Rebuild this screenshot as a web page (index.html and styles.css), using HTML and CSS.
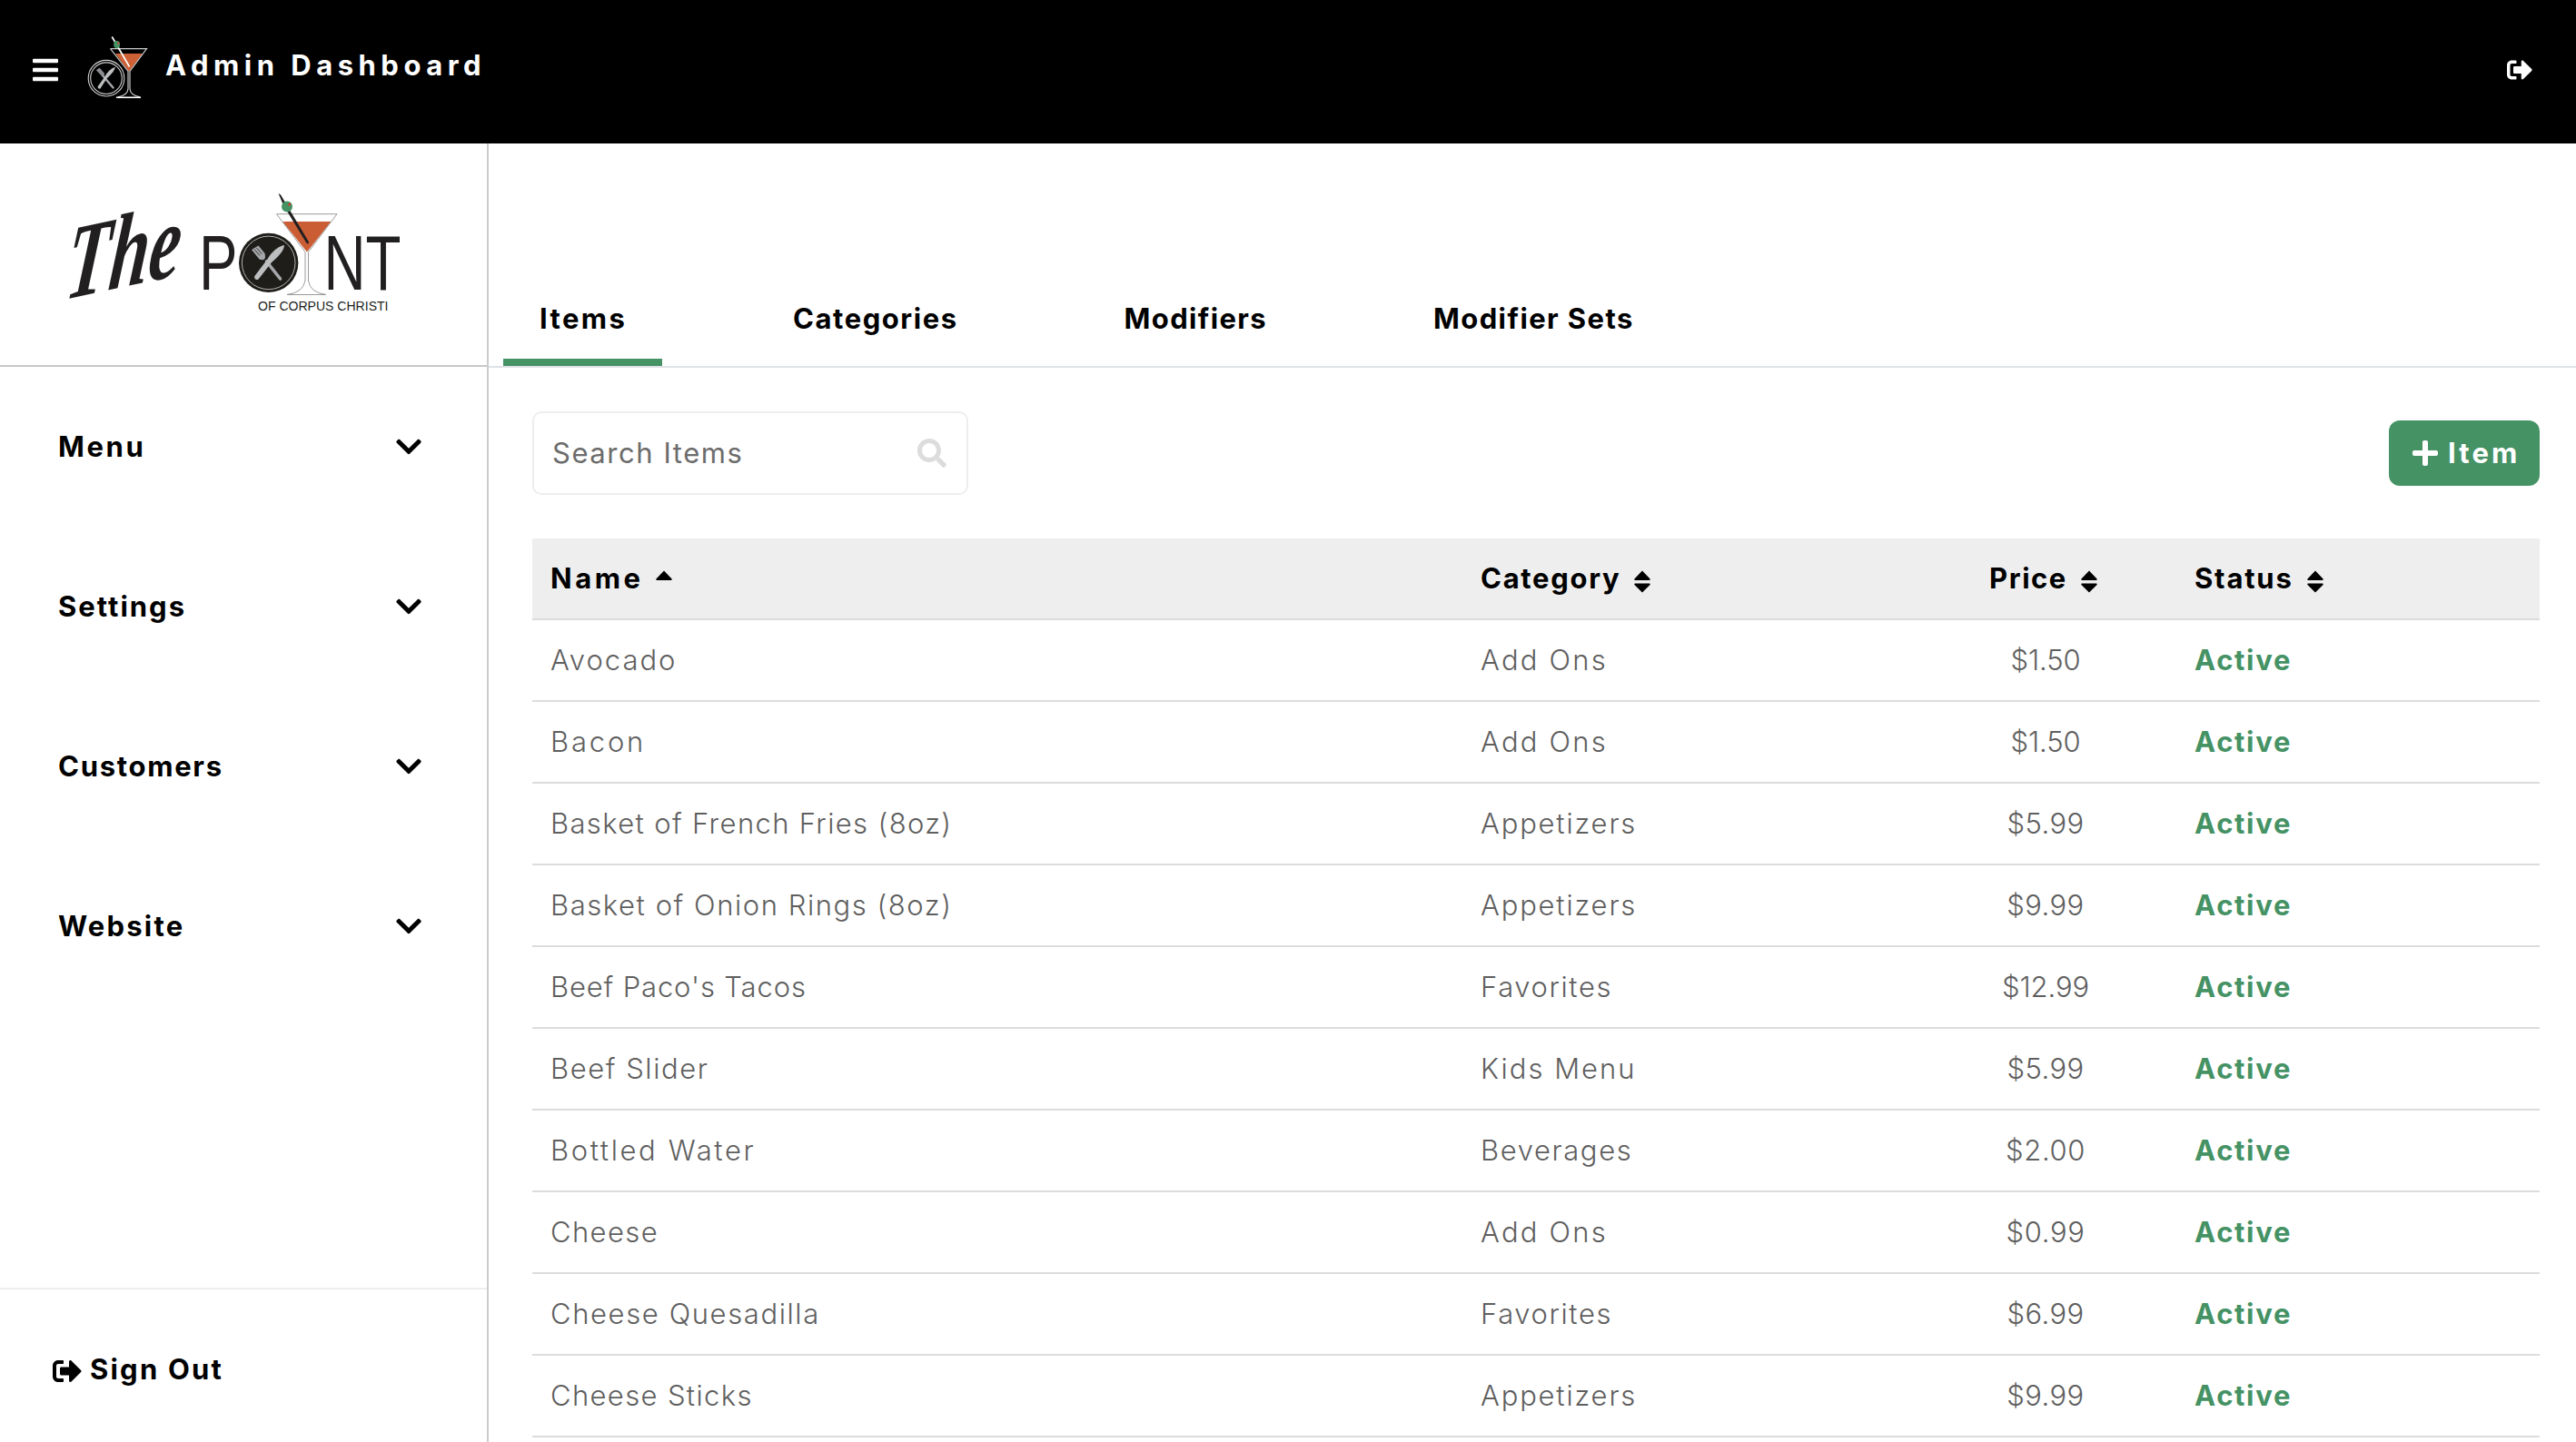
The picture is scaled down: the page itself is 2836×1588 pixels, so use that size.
FILE: index.html
```html
<!DOCTYPE html>
<html lang="en">
<head>
<meta charset="utf-8">
<title>Admin Dashboard</title>
<link rel="stylesheet" href="styles.css">
</head>
<body>
<svg class="defs" aria-hidden="true">
  <symbol id="i-out" viewBox="0 0 512 512"><path d="M497 273L329 441c-15 15-41 4.500-41-17v-96H152c-13.300 0-24-10.700-24-24v-96c0-13.300 10.700-24 24-24h136V88c0-21.400 25.900-32 41-17l168 168c9.300 9.400 9.300 24.600 0 34zM192 436v-40c0-6.600-5.400-12-12-12H96c-17.700 0-32-14.300-32-32V160c0-17.700 14.300-32 32-32h84c6.600 0 12-5.400 12-12V76c0-6.600-5.400-12-12-12H96c-53 0-96 43-96 96v192c0 53 43 96 96 96h84c6.600 0 12-5.400 12-12z"/></symbol>
  <symbol id="i-bars" viewBox="0 0 448 512"><rect y="60" width="448" height="72" rx="16"/><rect y="220" width="448" height="72" rx="16"/><rect y="380" width="448" height="72" rx="16"/></symbol>
  <symbol id="i-down" viewBox="0 0 448 512"><path d="M207.029 381.476L12.686 187.132c-9.373-9.373-9.373-24.569 0-33.941l22.667-22.667c9.357-9.357 24.522-9.375 33.901-.04L224 284.505l154.745-154.021c9.379-9.335 24.544-9.317 33.901.04l22.667 22.667c9.373 9.373 9.373 24.569 0 33.941L240.971 381.476c-9.373 9.372-24.569 9.372-33.942 0z"/></symbol>
  <symbol id="i-plus" viewBox="0 0 448 512"><path d="M416 208H272V64c0-17.670-14.330-32-32-32h-32c-17.670 0-32 14.330-32 32v144H32c-17.670 0-32 14.330-32 32v32c0 17.670 14.330 32 32 32h144v144c0 17.670 14.330 32 32 32h32c17.670 0 32-14.330 32-32V304h144c17.670 0 32-14.330 32-32v-32c0-17.670-14.330-32-32-32z"/></symbol>
  <symbol id="i-search" viewBox="0 0 512 512"><path d="M505 442.700L405.300 343c-4.500-4.500-10.600-7-17-7H372c27.600-35.300 44-79.700 44-128C416 93.100 322.900 0 208 0S0 93.100 0 208s93.100 208 208 208c48.300 0 92.700-16.400 128-44v16.300c0 6.400 2.500 12.500 7 17l99.700 99.700c9.400 9.400 24.600 9.400 33.900 0l28.300-28.300c9.400-9.400 9.400-24.600.1-34zM208 336c-70.700 0-128-57.200-128-128 0-70.700 57.200-128 128-128 70.700 0 128 57.200 128 128 0 70.700-57.200 128-128 128z"/></symbol>
  <symbol id="i-up" viewBox="0 0 18 25"><path d="M9 0.500L17.600 9.600Q18 11 17 11H1Q0 11 .4 9.600z"/></symbol>
  <symbol id="i-sort" viewBox="0 0 18 25"><path d="M9 0.500L17.600 9.600Q18 11 17 11H1Q0 11 .4 9.600zM9 24.500L17.600 16Q18 14.500 17 14.500H1Q0 14.500 .4 16z"/></symbol>
</svg>

<header class="topbar">
  <svg class="bars"><use href="#i-bars"/></svg>
  <svg class="mark" viewBox="0 0 90 90">
    <g fill="none" stroke="#d0d0d0">
      <circle cx="32" cy="56.200" r="19.800" stroke-width="1.100"/>
      <circle cx="32" cy="56.200" r="17.300" stroke-width="1.100"/>
    </g>
    <path d="M42 29H72L57 49z" fill="#cd6035"/>
    <path d="M36.500 23.700H76.500L58 48.500V68Q58.500 75 69 76.800M36.500 23.700L56 48.500V68Q55.500 75 45 76.800" fill="none" stroke="#c9c9c9" stroke-width="1.200"/>
    <path d="M43 77.300H70" stroke="#fff" stroke-width="1.600"/>
    <path d="M38.300 10.500L57.500 43.500" stroke="#fff" stroke-width="1.700"/>
    <ellipse cx="43.600" cy="19" rx="3.500" ry="3.900" fill="#459265"/>
    <circle cx="45.300" cy="17.700" r="1.100" fill="#d83a2a"/>
    <path d="M27.500 52.500L39.500 66.500" stroke="#a5a7aa" stroke-width="2.400" stroke-linecap="round"/>
    <path d="M20.800 47.200L24.600 44.800L29.600 50.300Q31 54.500 26.800 53.400z" fill="#8b8d90"/>
    <path d="M41.800 43.800Q42 48 32.500 56.500L25.500 67.500Q23 68.500 22.500 65.500L30 55Q35 46 41.800 43.800z" fill="#bcbec0"/>
  </svg>
  <h1 class="brand">Admin Dashboard</h1>
  <svg class="logout"><use href="#i-out"/></svg>
</header>

<div class="shell">
  <aside class="sidebar">
    <div class="logo">
      <svg class="logo-art" viewBox="60 205 390 145">
        <text class="script" x="0" y="0" font-size="116" textLength="126" lengthAdjust="spacingAndGlyphs" transform="translate(70 330) skewY(-12) skewX(-6)">The</text>
        <g class="caps" font-size="84.500">
          <text x="219" y="319" textLength="42.500" lengthAdjust="spacingAndGlyphs">P</text>
          <text x="356.500" y="319" textLength="85" lengthAdjust="spacingAndGlyphs">NT</text>
          <text x="284" y="341.800" font-size="15" textLength="143.500" lengthAdjust="spacingAndGlyphs">OF CORPUS CHRISTI</text>
        </g>
        <circle cx="295.700" cy="289.400" r="32.700" fill="#1f1d1a"/>
        <circle cx="295.700" cy="289.400" r="29.300" fill="none" stroke="#d8d8d4" stroke-width=".8"/>
        <path d="M293.500 288L308.500 307" stroke="#a5a7aa" stroke-width="3.600" stroke-linecap="round"/>
        <path d="M277 275L284.500 270.500L291.500 279Q294 288.500 285.500 285.500z" fill="#a5a7aa"/>
        <path d="M280 274.500L286 281.500M282.500 273L288.300 279.800" stroke="#1f1d1a" stroke-width=".8"/>
        <path d="M312.800 269.700Q314 276 299 289L284.500 307.500Q280.500 309.500 280 304.500L294 286Q301 273 312.800 269.700z" fill="#bcbec0"/>
        <path d="M311 244H364.500L338 277.500z" fill="#ca5d34"/>
        <path d="M304.500 235.700H371L339.500 277.500V309Q341 322 359 324.500H316Q334 322 336 309V277.500z" fill="none" stroke="#8f8f8f" stroke-width=".9"/>
        <path d="M306.500 213L309 214.500L340 266.500L339 269L337 267L312 226z" fill="#211f20"/>
        <circle cx="316" cy="227.500" r="6" fill="#459265"/>
        <circle cx="318.700" cy="225" r="1.500" fill="#d83a2a"/>
      </svg>
    </div>
    <nav class="nav">
      <a class="nav-item"><span class="tr-26">Menu</span><svg><use href="#i-down"/></svg></a>
      <a class="nav-item"><span class="tr-20">Settings</span><svg><use href="#i-down"/></svg></a>
      <a class="nav-item"><span class="tr-17">Customers</span><svg><use href="#i-down"/></svg></a>
      <a class="nav-item"><span class="tr-22">Website</span><svg><use href="#i-down"/></svg></a>
    </nav>
    <a class="signout"><svg><use href="#i-out"/></svg><span class="tr-22">Sign Out</span></a>
  </aside>

  <main class="main">
    <nav class="tabs">
      <a class="tab tab-items active tr-24">Items</a>
      <a class="tab tab-categories tr-15">Categories</a>
      <a class="tab tab-modifiers tr-13">Modifiers</a>
      <a class="tab tr-14">Modifier Sets</a>
    </nav>
    <section class="content">
      <div class="toolbar">
        <div class="search"><span class="tr-15">Search Items</span><svg><use href="#i-search"/></svg></div>
        <button class="add"><svg><use href="#i-plus"/></svg><span class="tr-31">Item</span></button>
      </div>
      <table class="items">
        <colgroup><col class="c-name"><col class="c-cat"><col class="c-price"><col class="c-status"></colgroup>
        <thead><tr>
          <th><div class="head"><span class="tr-35">Name</span><svg><use href="#i-up"/></svg></div></th>
          <th><div class="head"><span class="tr-17">Category</span><svg><use href="#i-sort"/></svg></div></th>
          <th><div class="head head-price"><span class="tr-15">Price</span><svg><use href="#i-sort"/></svg></div></th>
          <th><div class="head"><span class="tr-18">Status</span><svg><use href="#i-sort"/></svg></div></th>
        </tr></thead>
        <tbody>
          <tr><td class="tr-20">Avocado</td><td class="tr-22">Add Ons</td><td class="tr-0">$1.50</td><td>Active</td></tr>
          <tr><td class="tr-28">Bacon</td><td class="tr-22">Add Ons</td><td class="tr-0">$1.50</td><td>Active</td></tr>
          <tr><td class="tr-13">Basket of French Fries (8oz)</td><td class="tr-18">Appetizers</td><td class="tr-4">$5.99</td><td>Active</td></tr>
          <tr><td class="tr-15">Basket of Onion Rings (8oz)</td><td class="tr-18">Appetizers</td><td class="tr-4">$9.99</td><td>Active</td></tr>
          <tr><td class="tr-8">Beef Paco's Tacos</td><td class="tr-16">Favorites</td><td class="tr-0">$12.99</td><td>Active</td></tr>
          <tr><td class="tr-15">Beef Slider</td><td class="tr-20">Kids Menu</td><td class="tr-4">$5.99</td><td>Active</td></tr>
          <tr><td class="tr-26">Bottled Water</td><td class="tr-16">Beverages</td><td class="tr-6">$2.00</td><td>Active</td></tr>
          <tr><td class="tr-14">Cheese</td><td class="tr-22">Add Ons</td><td class="tr-6">$0.99</td><td>Active</td></tr>
          <tr><td class="tr-16">Cheese Quesadilla</td><td class="tr-16">Favorites</td><td class="tr-4">$6.99</td><td>Active</td></tr>
          <tr><td class="tr-13">Cheese Sticks</td><td class="tr-18">Appetizers</td><td class="tr-4">$9.99</td><td>Active</td></tr>
        </tbody>
      </table>
    </section>
  </main>
</div>
</body>
</html>
```
FILE: styles.css
```css
* { box-sizing: border-box; }

body {
  margin: 0;
  height: 1588px;
  overflow: hidden;
  display: flex;
  flex-direction: column;
  background: #fff;
  color: #000;
  font: 700 31px/40px Inter, "Liberation Sans", sans-serif;
}

svg { display: block; flex: none; fill: currentColor; }
.defs { display: none; }

/* Letter tracking, in tenths of a pixel */
.tr-0 { letter-spacing: -0.1px; }
.tr-4 { letter-spacing: 0.4px; }
.tr-6 { letter-spacing: 0.6px; }
.tr-8 { letter-spacing: 0.85px; }
.tr-13 { letter-spacing: 1.35px; }
.tr-14 { letter-spacing: 1.4px; }
.tr-15 { letter-spacing: 1.55px; }
.tr-16 { letter-spacing: 1.6px; }
.tr-17 { letter-spacing: 1.7px; }
.tr-18 { letter-spacing: 1.8px; }
.tr-20 { letter-spacing: 2px; }
.tr-22 { letter-spacing: 2.2px; }
.tr-24 { letter-spacing: 2.4px; }
.tr-26 { letter-spacing: 2.6px; }
.tr-28 { letter-spacing: 2.8px; }
.tr-31 { letter-spacing: 3.1px; }
.tr-35 { letter-spacing: 3.5px; }

/* Top bar */
.topbar {
  height: 158px;
  flex: none;
  display: flex;
  align-items: center;
  padding: 0 48px 4px 36px;
  background: #000;
  color: #fff;
}
.bars { width: 28px; height: 32px; }
.mark { width: 90px; height: 90px; margin: 0 7px 4px 21px; }
.brand { margin: 0 0 11px; font-size: 31px; line-height: 40px; letter-spacing: 5.5px; }
.logout { width: 28px; height: 28px; margin-left: auto; }

.shell { flex: 1; min-height: 0; display: flex; }

/* Sidebar */
.sidebar {
  width: 538px;
  flex: none;
  display: flex;
  flex-direction: column;
  border-right: 2px solid #cbcccd;
}
.logo { height: 246px; flex: none; padding: 47px 0 0 60px; border-bottom: 2px solid #c8c8c8; }
.logo-art { width: 390px; height: 145px; overflow: visible; }
.script { font-family: "Liberation Serif", serif; font-style: italic; font-weight: 700; fill: #211f20; }
.caps { font-family: "Liberation Sans", Arial, sans-serif; font-weight: 400; fill: #211f20; }
.nav { flex: 1; }
.nav-item {
  height: 176px;
  display: flex;
  align-items: center;
  justify-content: space-between;
  padding: 0 72px 0 64px;
}
.nav-item svg { width: 28px; height: 32px; }
.signout {
  height: 170px;
  flex: none;
  display: flex;
  align-items: center;
  gap: 9px;
  padding: 8px 0 0 58px;
  border-top: 2px solid #eee;
}
.signout svg { width: 32px; height: 32px; margin-top: 4px; }

/* Main column */
.main { flex: 1; min-width: 0; }
.tabs {
  height: 247px;
  display: flex;
  align-items: flex-end;
  gap: 104px;
  padding-left: 16px;
  border-bottom: 2px solid #dee2e6;
}
.tab {
  height: 97px;
  padding: 0 0 0 40px;
  line-height: 89px;
  border-bottom: 8px solid transparent;
  white-space: nowrap;
}
.tab-items { width: 175px; }
.tab-categories { width: 260.6px; }
.tab-modifiers { width: 236.4px; }
.tab.active { border-color: #459265; }

.content { padding: 48px 40px 0 48px; }
.toolbar { display: flex; align-items: center; justify-content: space-between; margin-bottom: 48px; }
.search {
  width: 480px;
  height: 92px;
  display: flex;
  align-items: center;
  justify-content: space-between;
  padding: 0 22px 0 20px;
  border: 2px solid #eee;
  border-radius: 10px;
  color: #6c6c6c;
  font-weight: 400;
}
.search svg { width: 32px; height: 32px; color: #dcdcdc; }
.add {
  width: 166px;
  height: 72px;
  display: flex;
  align-items: center;
  gap: 11px;
  padding: 0 0 0 26px;
  border: 0;
  border-radius: 12px;
  background: #459265;
  color: #fff;
  font: inherit;
}
.add svg { width: 28px; height: 32px; }

/* Items table */
.items { width: 2210px; table-layout: fixed; border-collapse: separate; border-spacing: 0; }
.c-name { width: 1024px; }
.c-cat { width: 498px; }
.c-price { width: 288px; }
.c-status { width: 400px; }
.items th, .items td {
  height: 90px;
  padding: 0 0 0 20px;
  border-bottom: 2px solid #dcdcdc;
  text-align: left;
  white-space: nowrap;
}
.items th { background: #eee; }
.items td { color: #5f5f5f; font-weight: 300; }
.items td:nth-child(3) { padding: 0; text-align: center; }
.items td:nth-child(4) { color: #459265; font-weight: 700; letter-spacing: 1.7px; }
.head { display: flex; align-items: center; gap: 15px; }
.head svg { width: 18px; height: 25px; margin-top: 6px; }
.items th:first-child .head { gap: 14px; }
.items th:nth-child(3) { padding: 0 5px 0 0; }
.head-price { justify-content: center; }
```
